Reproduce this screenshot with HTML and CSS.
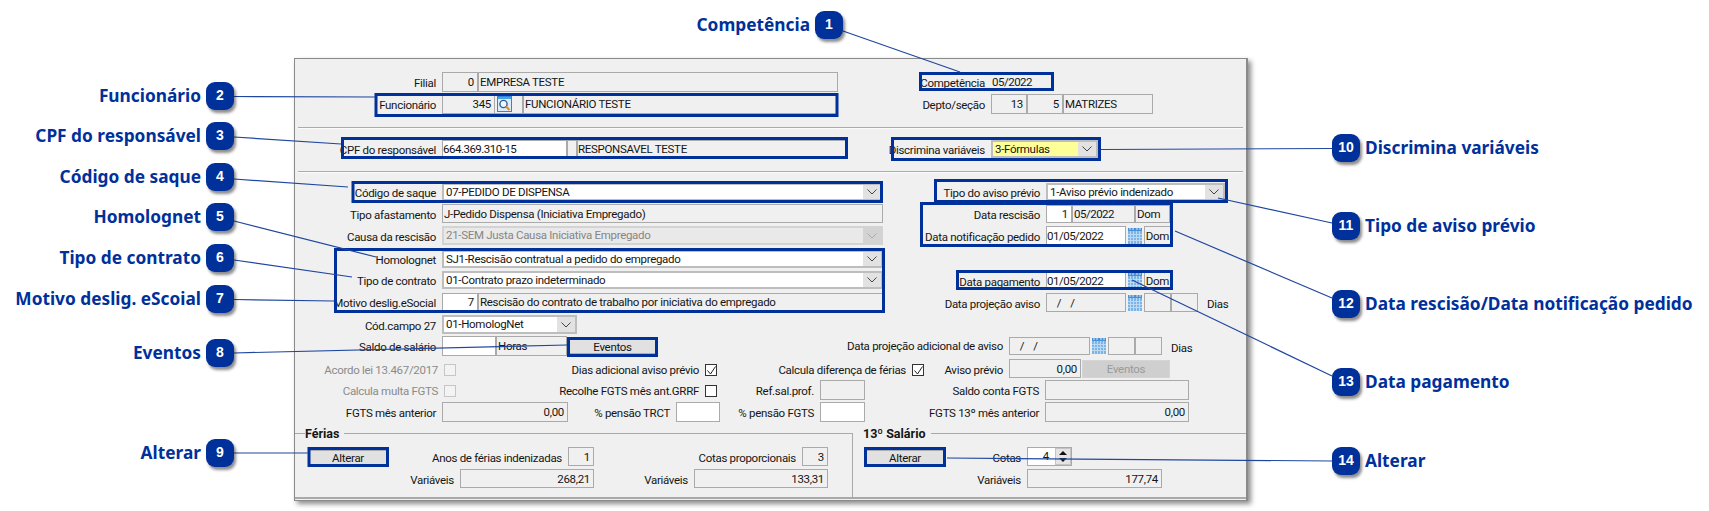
FILE: index.html
```html
<!DOCTYPE html>
<html lang="pt-BR">
<head>
<meta charset="utf-8">
<title>Rescisão</title>
<link rel="stylesheet" href="styles.css">
</head>
<body>
<main class="canvas">
  <section class="dialog">
    <div class="cols">
      <div class="col-l">
        <div class="row h20"><div class="lb l147">Filial</div><div class="f r w36">0</div><div class="f w360">EMPRESA TESTE</div></div>
        <div class="row h20 mt2"><div class="lb l147">Funcionário</div><div class="f r w53">345</div><div class="f w28 ic">
          <svg class="i-search" width="15" height="16" viewBox="0 0 15 16"><rect x=".5" y=".5" width="14" height="15" fill="#dcecfa" stroke="#2f86d6"/><rect x="1" y="1" width="13" height="2" fill="#4aa0e6"/><circle cx="6.500" cy="8" r="3.600" fill="#eef6ff" stroke="#2d5f9a" stroke-width="1.400"/><path d="M9 10.500l3.500 3.500" stroke="#e08a30" stroke-width="2"/></svg>
        </div><div class="f w315">FUNCIONÁRIO TESTE</div></div>
      </div>
      <div class="col-r">
        <div class="row h19"><div class="lb l106">Competência</div><div class="f w63 plain num">05/2022</div></div>
        <div class="row h20 mt3"><div class="lb l106">Depto/seção</div><div class="f r w36">13</div><div class="f r w36">5</div><div class="f w90">MATRIZES</div></div>
      </div>
    </div>
    <div class="sep s13"></div>
    <div class="cols s11">
      <div class="col-l">
        <div class="row h18"><div class="lb l147">CPF do responsável</div><div class="f white w125 num flush">664.369.310-15</div><div class="f w10"></div><div class="f w269 flush">RESPONSAVEL TESTE</div></div>
      </div>
      <div class="col-r">
        <div class="row h18"><div class="lb l106">Discrimina variáveis</div>
          <div class="sel w107"><div class="sel-t yellow">3-Fórmulas</div><div class="sel-a"><svg width="10" height="6" viewBox="0 0 10 6"><path d="M.5.5L5 5 9.500.5" fill="none" stroke="#444"/></svg></div></div>
        </div>
      </div>
    </div>
    <div class="sep s13"></div>
    <div class="cols s10">
      <div class="col-l">
        <div class="row h18"><div class="lb l147">Código de saque</div>
          <div class="sel w441"><div class="sel-t">07-PEDIDO DE DISPENSA</div><div class="sel-a"><svg width="10" height="6" viewBox="0 0 10 6"><path d="M.5.5L5 5 9.500.5" fill="none" stroke="#444"/></svg></div></div></div>
        <div class="row h19 mt3"><div class="lb l147">Tipo afastamento</div><div class="f w441">J-Pedido Dispensa (Iniciativa Empregado)</div></div>
        <div class="row h19 mt3"><div class="lb l147">Causa da rescisão</div>
          <div class="sel dis w441"><div class="sel-t">21-SEM Justa Causa Iniciativa Empregado</div><div class="sel-a"><svg width="10" height="6" viewBox="0 0 10 6"><path d="M.5.5L5 5 9.500.5" fill="none" stroke="#aaa"/></svg></div></div></div>
        <div class="row h18 mt5"><div class="lb l147">Homolognet</div>
          <div class="sel w441"><div class="sel-t">SJ1-Rescisão contratual a pedido do empregado</div><div class="sel-a"><svg width="10" height="6" viewBox="0 0 10 6"><path d="M.5.5L5 5 9.500.5" fill="none" stroke="#444"/></svg></div></div></div>
        <div class="row h18 mt3"><div class="lb l147">Tipo de contrato</div>
          <div class="sel w441"><div class="sel-t">01-Contrato prazo indeterminado</div><div class="sel-a"><svg width="10" height="6" viewBox="0 0 10 6"><path d="M.5.5L5 5 9.500.5" fill="none" stroke="#444"/></svg></div></div></div>
        <div class="row h18 mt4"><div class="lb l147">Motivo deslig.eSocial</div><div class="f r white w36">7</div><div class="f w405">Rescisão do contrato de trabalho por iniciativa do empregado</div></div>
        <div class="row h19 mt4"><div class="lb l147">Cód.campo 27</div>
          <div class="sel w135"><div class="sel-t">01-HomologNet</div><div class="sel-a"><svg width="10" height="6" viewBox="0 0 10 6"><path d="M.5.5L5 5 9.500.5" fill="none" stroke="#444"/></svg></div></div></div>
      </div>
      <div class="col-r">
        <div class="row h18"><div class="lb l161">Tipo do aviso prévio</div>
          <div class="sel w179"><div class="sel-t">1-Aviso prévio indenizado</div><div class="sel-a"><svg width="10" height="6" viewBox="0 0 10 6"><path d="M.5.5L5 5 9.500.5" fill="none" stroke="#444"/></svg></div></div></div>
        <div class="row h18 mt4"><div class="lb l161">Data rescisão</div><div class="f r white w26">1</div><div class="f w63 num">05/2022</div><div class="f w35">Dom</div></div>
        <div class="row h19 mt3"><div class="lb l161">Data notificação pedido</div><div class="f white w80 flush num">01/05/2022</div><div class="cal-wrap"><svg class="i-cal" width="14" height="16" viewBox="0 0 14 16"><use href="#cal"/></svg></div><div class="f w27 ctr">Dom</div></div>
        <div class="row h18 g27"><div class="lb l161">Data pagamento</div><div class="f white w80 flush num">01/05/2022</div><div class="cal-wrap"><svg class="i-cal" width="14" height="16" viewBox="0 0 14 16"><use href="#cal"/></svg></div><div class="f w27 ctr">Dom</div></div>
        <div class="row h19 mt3"><div class="lb l161">Data projeção aviso</div><div class="f w80 dt"> /  /</div><div class="cal-wrap"><svg class="i-cal" width="14" height="16" viewBox="0 0 14 16"><use href="#cal"/></svg></div><div class="f w27"></div><div class="f w27"></div><div class="unit">Dias</div></div>
      </div>
    </div>
    <div class="row h20 mt2">
      <div class="lb l147">Saldo de salário</div><div class="f white w54"></div><div class="f w71">Horas</div>
      <button class="btn w87" type="button">Eventos</button>
      <div class="lb l353 b18">Data projeção adicional de aviso</div><div class="f w81 b18 dt"> /  /</div><div class="cal-wrap"><svg class="i-cal" width="14" height="16" viewBox="0 0 14 16"><use href="#cal"/></svg></div><div class="f w27 b18"></div><div class="f w27 b18"></div><div class="unit">Dias</div>
    </div>
    <div class="row h19 mt3">
      <div class="lb l149 muted">Acordo lei 13.467/2017</div><span class="ck dim"></span>
      <div class="lb l249">Dias adicional aviso prévio</div><span class="ck on"><svg width="11" height="11" viewBox="0 0 11 11"><path d="M1.500 5.500L4.500 9l5-7.500" fill="none" stroke="#222"/></svg></span>
      <div class="lb l195">Calcula diferença de férias</div><span class="ck on"><svg width="11" height="11" viewBox="0 0 11 11"><path d="M1.500 5.500L4.500 9l5-7.500" fill="none" stroke="#222"/></svg></span>
      <div class="lb l85">Aviso prévio</div><div class="f r w72">0,00</div><button class="btn off w88" type="button" disabled>Eventos</button>
    </div>
    <div class="row h20 mt2">
      <div class="lb l149 muted">Calcula multa FGTS</div><span class="ck dim"></span>
      <div class="lb l249">Recolhe FGTS mês ant.GRRF</div><span class="ck"></span>
      <div class="lb l103">Ref.sal.prof.</div><div class="f w45"></div>
      <div class="lb l180">Saldo conta FGTS</div><div class="f w144"></div>
    </div>
    <div class="row h20 mt2">
      <div class="lb l147">FGTS mês anterior</div><div class="f r w126">0,00</div>
      <div class="lb l108">% pensão TRCT</div><div class="f white w44"></div>
      <div class="lb l100">% pensão FGTS</div><div class="f white w45"></div>
      <div class="lb l180">FGTS 13º mês anterior</div><div class="f r w144">0,00</div>
    </div>
    <div class="groups">
      <div class="group ferias">
        <div class="legend"><span>Férias</span></div>
        <div class="row h19 tight">
          <button class="btn w78" type="button">Alterar</button>
          <div class="lb l181">Anos de férias indenizadas</div><div class="f r w26">1</div>
          <div class="lb l208">Cotas proporcionais</div><div class="f r w26">3</div>
        </div>
        <div class="row h19 mt3">
          <div class="lb l151">Variáveis</div><div class="f r w134">268,21</div>
          <div class="lb l100">Variáveis</div><div class="f r w134">133,31</div>
        </div>
      </div>
      <div class="group decimo">
        <div class="legend"><span>13º Salário</span></div>
        <div class="row h19 tight">
          <button class="btn w78" type="button">Alterar</button>
          <div class="lb l83">Cotas</div>
          <div class="spin"><span class="spin-v">4</span><span class="spin-b"><i class="up"></i><i class="dn"></i></span></div>
        </div>
        <div class="row h19 mt3">
          <div class="lb l161">Variáveis</div><div class="f r w135">177,74</div>
        </div>
      </div>
    </div>
  </section>

  <svg class="overlay" width="1709" height="511" viewBox="0 0 1709 511" aria-hidden="true">
    <defs>
      <symbol id="cal" viewBox="0 0 14 16">
        <rect width="14" height="16" fill="#7db4e8"/>
        <rect width="14" height="3" fill="#4b8fd6"/>
        <path d="M2 0v2M5 0v2M9 0v2M12 0v2" stroke="#d8e8f8"/>
        <path d="M0 6.500h14M0 9.500h14M0 12.500h14M2.500 3v13M5.500 3v13M8.500 3v13M11.500 3v13" stroke="#bcd9f4"/>
      </symbol>
    </defs>
    <g class="boxes">
      <rect x="376" y="94.500" width="461" height="21"/>
      <rect x="920.500" y="73.500" width="132" height="16"/>
      <rect x="342.500" y="138.500" width="504" height="19"/>
      <rect x="892.500" y="138.500" width="207" height="21"/>
      <rect x="353" y="182.500" width="528.500" height="19"/>
      <rect x="935.500" y="180.500" width="291" height="21"/>
      <rect x="921.500" y="203.500" width="250" height="42"/>
      <rect x="957.500" y="271.500" width="214" height="17"/>
      <rect x="335.500" y="249.500" width="548" height="62"/>
      <rect x="568.500" y="338.500" width="88" height="17"/>
      <rect x="309" y="448.500" width="78.500" height="17"/>
      <rect x="865.500" y="448.500" width="79" height="17"/>
    </g>
    <g class="leaders">
      <line x1="843" y1="31" x2="960" y2="72"/>
      <line x1="234" y1="96.500" x2="375" y2="97"/>
      <line x1="234" y1="137" x2="341" y2="144"/>
      <line x1="234" y1="179" x2="348" y2="187"/>
      <line x1="234" y1="221" x2="376" y2="257"/>
      <line x1="234" y1="260" x2="352" y2="277"/>
      <line x1="234" y1="299.500" x2="334" y2="301"/>
      <line x1="234" y1="353" x2="567" y2="345"/>
      <line x1="234" y1="453" x2="308" y2="453"/>
      <line x1="1101" y1="149.500" x2="1332" y2="148.500"/>
      <line x1="1218" y1="198" x2="1332" y2="223"/>
      <line x1="1175" y1="231" x2="1332" y2="298"/>
      <line x1="1132" y1="280" x2="1332" y2="376"/>
      <line x1="947" y1="458" x2="1332" y2="461"/>
    </g>
  </svg>

  <div class="tag tl c1"><span>Competência</span><b>1</b></div>
  <div class="tag tl c2"><span>Funcionário</span><b>2</b></div>
  <div class="tag tl c3"><span>CPF do responsável</span><b>3</b></div>
  <div class="tag tl c4"><span>Código de saque</span><b>4</b></div>
  <div class="tag tl c5"><span>Homolognet</span><b>5</b></div>
  <div class="tag tl c6"><span>Tipo de contrato</span><b>6</b></div>
  <div class="tag tl c7"><span>Motivo deslig. eScoial</span><b>7</b></div>
  <div class="tag tl c8"><span>Eventos</span><b>8</b></div>
  <div class="tag tl c9"><span>Alterar</span><b>9</b></div>
  <div class="tag tr c10"><b>10</b><span>Discrimina variáveis</span></div>
  <div class="tag tr c11"><b>11</b><span>Tipo de aviso prévio</span></div>
  <div class="tag tr c12"><b>12</b><span>Data rescisão/Data notificação pedido</span></div>
  <div class="tag tr c13"><b>13</b><span>Data pagamento</span></div>
  <div class="tag tr c14"><b>14</b><span>Alterar</span></div>
</main>
</body>
</html>
```
FILE: styles.css
```css
* { box-sizing: border-box; }
html, body { margin: 0; padding: 0; background: #fff; }
.canvas { position: relative; width: 1709px; height: 511px; overflow: hidden; background: #fff; }

/* Window */
.dialog {
  position: absolute; left: 294px; top: 58px; width: 954px; height: 443px;
  padding-top: 13px;
  background: #f0f0f0;
  border: 1px solid #8a8a8a; border-right-width: 2px;
  box-shadow: 3px 3px 5px #8c8c8c;
  font: 11.5px/14px Roboto, "Liberation Sans", sans-serif;
  letter-spacing: -.3px;
  color: #151515;
}
.cols { display: flex; }
.col-l { width: 590px; flex: none; }
.col-r { flex: 1; }
.sep { height: 2px; margin-left: 3px; margin-right: 3px; background: linear-gradient(#ababab 50%, #fbfbfb 50%); }
.s13 { margin-top: 13px; }
.s11 { margin-top: 11px; }
.s10 { margin-top: 10px; }

.row { display: flex; align-items: center; }
.h18 { height: 18px; } .h19 { height: 19px; } .h20 { height: 20px; }
.mt2 { margin-top: 2px; } .mt3 { margin-top: 3px; } .mt4 { margin-top: 4px; } .mt5 { margin-top: 5px; }
.g27 { margin-top: 27px; }

.lb { flex: none; padding-right: 6px; padding-top: 2px; text-align: right; white-space: nowrap; }
.muted { color: #8b8b8b; }
.l83 { width: 83px; } .l85 { width: 85px; } .l100 { width: 100px; } .l103 { width: 103px; }
.l106 { width: 106px; } .l108 { width: 108px; } .l147 { width: 147px; } .l149 { width: 149px; }
.l151 { width: 151px; } .l161 { width: 161px; } .l180 { width: 180px; }
.l181 { width: 181px; } .l195 { width: 195px; } .l208 { width: 208px; } .l249 { width: 249px; }
.l353 { width: 353px; }

.f {
  flex: none; height: 100%; display: flex; align-items: center;
  padding: 0 1px; border: 1px solid #aaa; white-space: pre; overflow: hidden;
}
.r { justify-content: flex-end; padding-right: 3px; }
.white { background: #fff; }
.plain { border-color: #f0f0f0; padding-left: 0; }
.flush { padding-left: 0; }
.num { letter-spacing: -.5px; }
.ctr { justify-content: center; }
.dt { padding-left: 6px; letter-spacing: 1px; }
.ic { justify-content: flex-start; padding-left: 2px; border-left: 0; }
.i-search { display: block; }
.b18 { height: 18px; }
.w10 { width: 10px; } .w26 { width: 26px; } .w27 { width: 27px; } .w28 { width: 28px; } .w35 { width: 35px; }
.w36 { width: 36px; } .w44 { width: 44px; } .w45 { width: 45px; } .w53 { width: 53px; } .w54 { width: 54px; }
.w63 { width: 63px; } .w71 { width: 71px; } .w72 { width: 72px; } .w78 { width: 78px; } .w80 { width: 80px; }
.w81 { width: 81px; } .w87 { width: 87px; } .w88 { width: 88px; } .w90 { width: 90px; } .w107 { width: 107px; }
.w125 { width: 125px; } .w126 { width: 126px; } .w134 { width: 134px; } .w135 { width: 135px; } .w144 { width: 144px; }
.w179 { width: 179px; } .w269 { width: 269px; } .w315 { width: 315px; } .w360 { width: 360px; } .w405 { width: 405px; }
.w441 { width: 441px; }

.sel { flex: none; height: 100%; display: flex; border: 2px solid #bdbdbd; background: #e2e2e2; }
.sel-t { flex: 1; padding-left: 2px; background: #fff; line-height: 14px; white-space: nowrap; overflow: hidden; }
.sel-a { flex: none; width: 18px; display: flex; align-items: center; justify-content: center; }
.yellow { background: #ffff99; }
.sel.dis { background: #d3d3d3; border-color: #d3d3d3; color: #858585; }
.sel.dis .sel-t { background: #e9e9e9; }

.cal-wrap { flex: none; width: 18px; display: flex; justify-content: center; }
.i-cal { display: block; }
.unit { padding-left: 9px; padding-top: 3px; }

.btn {
  flex: none; height: 15px; margin-left: 2px; padding: 0;
  font: inherit; letter-spacing: inherit; color: #151515; line-height: 14px;
  background: #e1e1e1; border: 1px solid #adadad;
}
.btn.off { height: 18px; margin-left: 1px; background: #cfcfcf; border-color: #d5d5d5; color: #9a9a9a; }

.ck {
  flex: none; width: 12px; height: 12px; margin-top: 2px;
  display: block; background: #fff; border: 1px solid #333;
}
.ck svg { display: block; }
.ck.dim { background: #f3f3f3; border-color: #c6c6c6; }

/* Bottom groups */
.groups { display: flex; margin-top: 11px; height: 66px; border-bottom: 2px solid #a9a9a9; }
.group { position: relative; }
.ferias { width: 558px; padding-left: 14px; border-right: 1px solid #a9a9a9; }
.decimo { flex: 1; padding-left: 13px; }
.legend {
  height: 13px; margin-left: -14px; margin-top: -6px; margin-bottom: 7px;
  display: flex; align-items: center; font-weight: 700; font-size: 12.5px; letter-spacing: 0;
}
.decimo .legend { margin-left: -13px; }
.legend::before { content: ""; width: 10px; height: 1px; background: #a9a9a9; }
.decimo .legend::before { width: 10px; background: #f0f0f0; }
.legend::after { content: ""; flex: 1; height: 1px; background: #a9a9a9; }
.legend span { padding: 0 5px 0 0; }
.tight .btn { height: 16px; margin-left: 0; margin-top: 3px; }
.tight .lb { padding-top: 2px; }

.spin { flex: none; width: 45px; height: 100%; display: flex; background: #fff; border: 1px solid #aaa; position: relative; }
.spin-v { flex: 1; text-align: right; padding-right: 6px; line-height: 16px; }
.spin-b { width: 16px; display: flex; flex-direction: column; background: #e4e4e4; border: 1px solid #c4c4c4; }
.spin-b i { flex: 1; display: flex; align-items: center; justify-content: center; }
.spin-b i::before { content: ""; width: 0; height: 0; border-left: 4px solid transparent; border-right: 4px solid transparent; }
.spin-b .up::before { border-bottom: 4px solid #111; }
.spin-b .dn::before { border-top: 4px solid #111; }

/* Annotation layer */
.overlay { position: absolute; left: 0; top: 0; pointer-events: none; }
.boxes rect { fill: none; stroke: #00309a; stroke-width: 3; }
.leaders line { stroke: #1f479f; stroke-width: 1.2; }

.tag {
  position: absolute; display: flex; align-items: center; height: 28px;
  font: 700 17.3px/28px "Noto Sans", "Liberation Sans", sans-serif; color: #00309a; white-space: nowrap;
}
.tag b {
  flex: none; width: 28px; height: 28px; border-radius: 9px;
  background: #00309a; color: #fff; text-align: center;
  font: 700 14px/27px "Liberation Sans", sans-serif;
  box-shadow: 2px 3px 3px rgba(0, 0, 0, .45);
}
.tl { right: 1475px; }
.tl span { margin-right: 5px; }
.tr { left: 1332px; }
.tr span { margin-left: 5px; }
.c1 { top: 11px; right: 866px; }
.c2 { top: 82px; } .c3 { top: 122px; } .c4 { top: 163px; } .c5 { top: 203px; }
.c6 { top: 244px; } .c7 { top: 285px; } .c8 { top: 339px; } .c9 { top: 439px; }
.c10 { top: 134px; } .c11 { top: 212px; } .c12 { top: 290px; } .c13 { top: 368px; } .c14 { top: 447px; }
```
